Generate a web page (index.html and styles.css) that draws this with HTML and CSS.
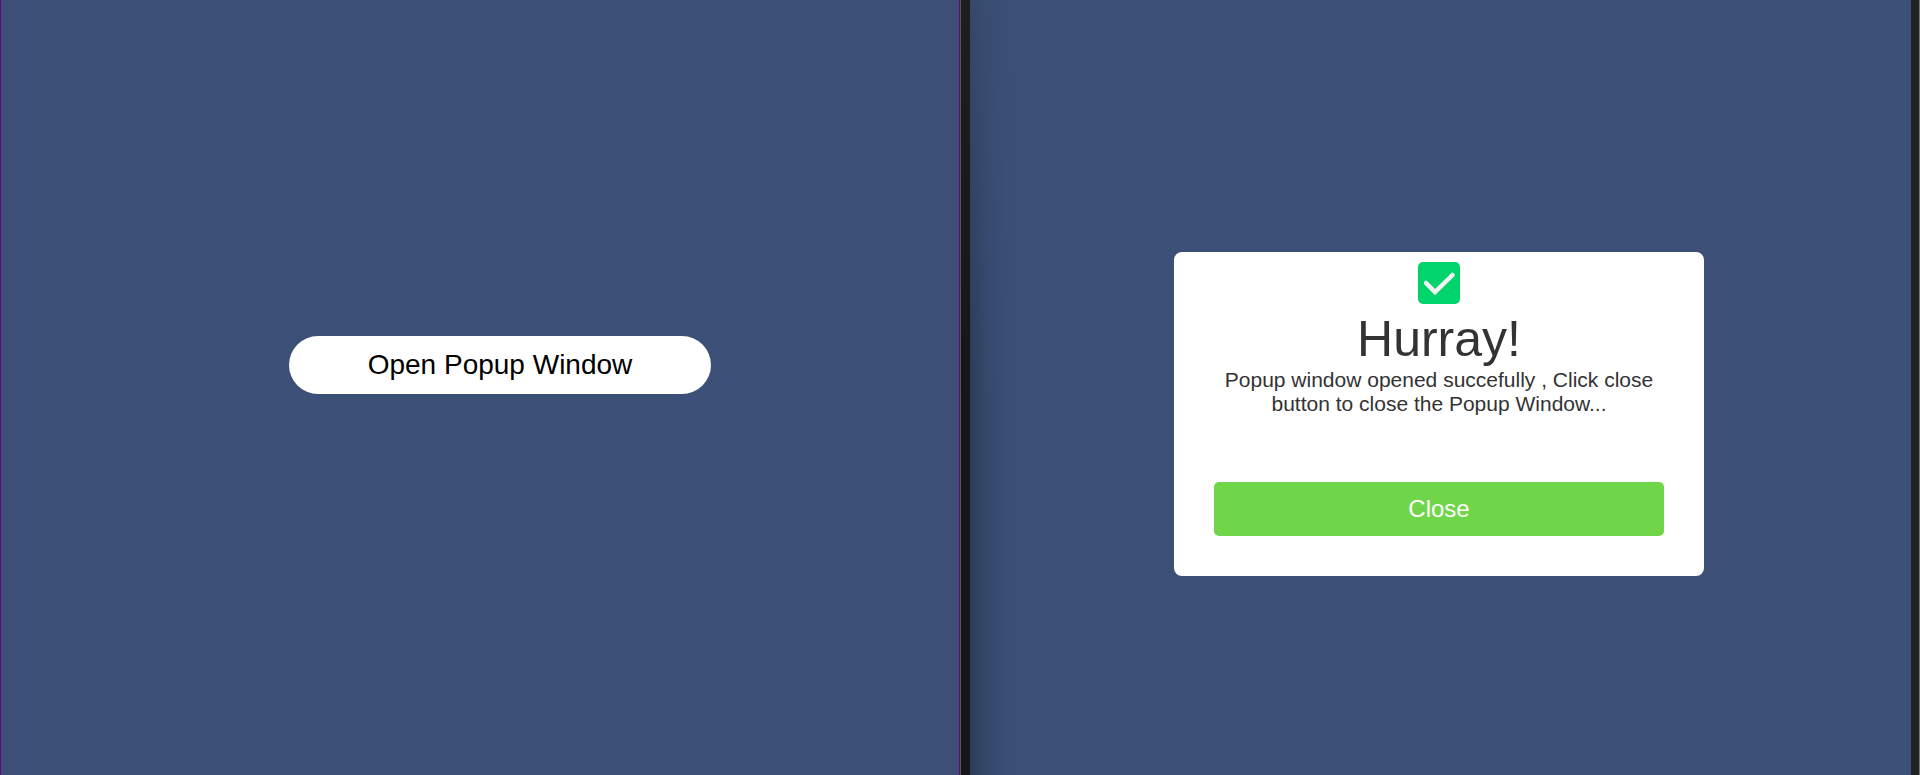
FILE: index.html
```html
<!DOCTYPE html>
<html lang="en">
<head>
<meta charset="utf-8">
<title>Popup Window</title>
<link rel="stylesheet" href="styles.css">
</head>
<body>
<main class="views">
  <section class="view view-closed">
    <button class="open-button" type="button">Open Popup Window</button>
  </section>
  <div class="divider"></div>
  <section class="view view-open">
    <div class="popup" role="dialog" aria-labelledby="popup-title">
      <svg class="popup-icon" viewBox="0 0 42 42" aria-hidden="true">
        <rect width="42" height="42" rx="5" fill="#00d46a"/>
        <path d="M8 21L17 30L34.500 13" fill="none" stroke="#f4f4f4" stroke-width="4.500" stroke-linecap="round"/>
      </svg>
      <h1 class="popup-title" id="popup-title">Hurray!</h1>
      <p class="popup-text">Popup window opened succefully , Click close button to close the Popup Window...</p>
      <button class="close-button" type="button">Close</button>
    </div>
  </section>
  <div class="edge"></div>
</main>
</body>
</html>
```
FILE: styles.css
```css
* {
  box-sizing: border-box;
}

body {
  margin: 0;
  background: #3c5077;
  color: #333;
  font-family: "Liberation Sans", Arial, sans-serif;
}

.views {
  display: flex;
  min-height: 100vh;
}

.view {
  display: flex;
  align-items: center;
  justify-content: center;
}

.view-closed {
  width: 50%;
  padding: 0 0 45px 40px;
  border: solid #6b0083;
  border-width: 0 1px;
}

.view-open {
  position: relative;
  flex: 1;
  padding: 52px 3px 0 0;
}

/* Shade cast by the divider, deepening from top to bottom */
.view-open::before {
  content: "";
  position: absolute;
  inset: 0 auto 0 0;
  width: 40px;
  background: linear-gradient(to right, rgba(0, 0, 0, 0.26), rgba(0, 0, 0, 0.1) 40%, transparent);
  mask-image: linear-gradient(rgba(0, 0, 0, 0.4), #000 400px);
}

.divider {
  width: 10px;
  border-left: 1px solid #555;
  background: linear-gradient(#1e1e1e, #161616 400px);
}

.edge {
  width: 9px;
  border-right: 1px solid #777;
  background: #222;
}

.open-button {
  height: 58px;
  padding: 0 79px;
  border: 0;
  border-radius: 29px;
  background: #fff;
  color: #000;
  font: 28px "Liberation Sans", Arial, sans-serif;
}

.popup {
  display: flex;
  flex-direction: column;
  align-items: center;
  width: 530px;
  padding: 10px 40px 40px;
  border-radius: 8px;
  background: #fff;
  text-align: center;
}

.popup-icon {
  width: 42px;
  height: 42px;
}

.popup-title {
  margin: 6px 0 0;
  font-size: 50px;
  font-weight: 400;
  line-height: 58px;
}

.popup-text {
  margin: 0;
  font-size: 21px;
  line-height: 24px;
}

.close-button {
  width: 100%;
  height: 54px;
  margin-top: 66px;
  border: 0;
  border-radius: 5px;
  background: #6fd649;
  color: #fff;
  font: 24px "Liberation Sans", Arial, sans-serif;
}
```
